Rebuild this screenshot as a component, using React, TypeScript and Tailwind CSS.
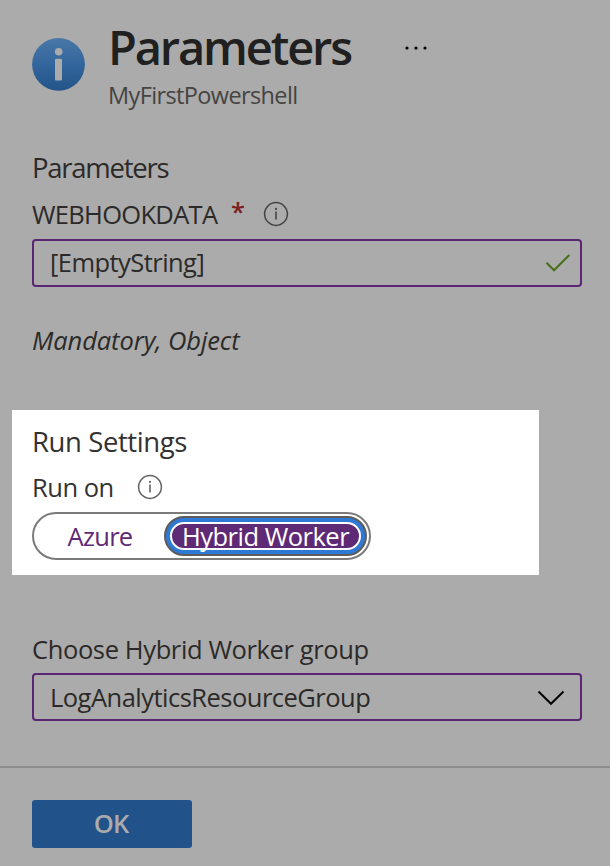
import React from "react";

function InfoGlyph() {
  return (
    <svg width="26" height="26" viewBox="0 0 26 26" fill="none" className="shrink-0">
      <circle cx="13" cy="13" r="11.4" stroke="currentColor" strokeWidth="1.5" />
      <path d="M13 10.6V18.6" stroke="currentColor" strokeWidth="1.6" />
      <circle cx="13" cy="7.9" r="1.1" fill="currentColor" />
    </svg>
  );
}

function Header() {
  return (
    <header className="flex h-[130px] pl-8">
      <svg width="54" height="54" viewBox="0 0 54 54" className="mt-[37px] shrink-0">
        <defs>
          <linearGradient id="badge" x1="0" y1="0" x2="0" y2="1">
            <stop offset="0" stopColor="#4978a8" />
            <stop offset="0.5" stopColor="#33669d" />
            <stop offset="1" stopColor="#235489" />
          </linearGradient>
        </defs>
        <circle cx="26.5" cy="27.3" r="26.4" fill="url(#badge)" />
        <circle cx="26.7" cy="14.7" r="3.8" fill="#ababab" />
        <rect x="23" y="21.7" width="7" height="21.8" rx="1.3" fill="#ababab" />
      </svg>
      <div className="flex flex-col pl-[22px] pt-5">
        <div className="flex h-[52px]">
          <h1 className="w-[296px] whitespace-nowrap text-[47px] font-semibold leading-[54px] tracking-[-2.15px] text-[#202020]">
            Parameters
          </h1>
          <svg width="24" height="6" viewBox="0 0 24 6" className="mt-[25px]">
            <circle cx="3" cy="3" r="1.6" />
            <circle cx="12" cy="3" r="1.6" />
            <circle cx="21" cy="3" r="1.6" />
          </svg>
        </div>
        <p className="mt-2 h-[30px] text-[23.5px] leading-[30px] tracking-[-0.62px] text-[#454443]">MyFirstPowershell</p>
      </div>
    </header>
  );
}

export default function App() {
  return (
    <main className="flex h-[866px] w-[610px] flex-col overflow-hidden bg-[#ababab] font-['Open_Sans','Noto_Sans',sans-serif] text-[25.5px] leading-[32px] text-[#2b2a29]">
      <Header />

      <section className="flex h-[280px] flex-col pl-8 pt-[22px]">
        <h2 className="h-8 text-[27.5px] tracking-[-1.25px]">Parameters</h2>
        <div className="mt-[14px] flex h-8">
          <span className="w-[199px] whitespace-nowrap tracking-[-0.7px]">WEBHOOKDATA</span>
          <span className="-mt-[3px] w-[32px] font-semibold text-[#7c2020]">*</span>
          <span className="mt-[3px] text-[#444]">
            <InfoGlyph />
          </span>
        </div>
        <div className="mt-[9px] flex h-12 w-[550px] items-center justify-between rounded-[4px] border-2 border-[#5a2572] pl-[16px] pr-[8px]">
          <span className="pb-0.5 tracking-[-0.55px]">[EmptyString]</span>
          <svg width="28" height="22" viewBox="0 0 28 22" fill="none">
            <path d="M2.5 10.8L10 18.3L25.3 3" stroke="#467018" strokeWidth="2" />
          </svg>
        </div>
        <p className="mt-[37px] h-8 italic tracking-[-0.1px]">Mandatory, Object</p>
      </section>

      <section className="ml-3 flex h-[165px] w-[527px] flex-col bg-white pl-5 pt-[16px] text-[#333231]">
        <h2 className="h-8 text-[27.5px] tracking-[-0.4px]">Run Settings</h2>
        <div className="mt-[13px] flex h-8">
          <span className="w-[105px] tracking-[-0.5px]">Run on</span>
          <span className="mt-[3px] text-[#626262]">
            <InfoGlyph />
          </span>
        </div>
        <div className="mt-[9px] flex h-12 w-[339px] items-center rounded-full border-2 border-[#7b7b7b]">
          <button className="h-8 w-[130px] pb-0.5 pl-[2px] text-[#5f2a75]">
            <span className="tracking-[-0.7px]">Azure</span>
          </button>
          <button className="flex h-[40px] w-[203px] items-center justify-center rounded-full border-2 border-[#5d5c5b] bg-[#2f79d6] p-1">
            <span className="flex h-7 w-full items-center justify-center whitespace-nowrap rounded-full border-2 border-white bg-[#5f2a75] pb-px tracking-[-0.5px] text-white">
              Hybrid Worker
            </span>
          </button>
        </div>
      </section>

      <section className="flex h-[191px] flex-col pl-8 pt-[58px]">
        <label className="h-8 tracking-[-0.38px]">Choose Hybrid Worker group</label>
        <div className="mt-[8px] flex h-12 w-[550px] items-center justify-between rounded-[4px] border-2 border-[#5a2572] pl-[16px] pr-[15px]">
          <span className="tracking-[-0.52px]">LogAnalyticsResourceGroup</span>
          <svg width="28" height="18" viewBox="0 0 28 18" fill="none">
            <path d="M1.5 3.5L14 15.8L26.5 3.5" stroke="#050505" strokeWidth="2" />
          </svg>
        </div>
      </section>

      <footer className="h-[100px] border-t-2 border-[#8e8e8d] pl-8 pt-8">
        <button className="block h-12 w-40 rounded-[3px] bg-[#21528a] pb-[3px] pr-0.5 font-semibold text-[#ababab]">
          <span className="tracking-[-1px]">OK</span>
        </button>
      </footer>
    </main>
  );
}
